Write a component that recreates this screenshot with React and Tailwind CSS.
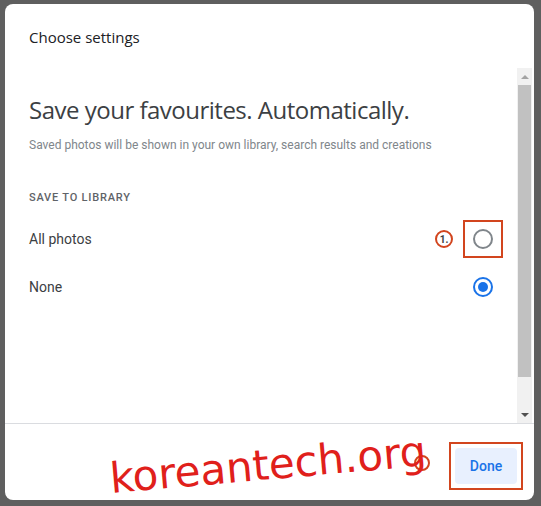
import { useState } from 'react'

function Radio({ checked }) {
  return checked ? (
    <span className="flex h-[20px] w-[20px] items-center justify-center rounded-full border-2 border-[#1a73e8]">
      <span className="h-[10px] w-[10px] rounded-full bg-[#1a73e8]" />
    </span>
  ) : (
    <span className="block h-[20px] w-[20px] rounded-full border-2 border-[#80868b]" />
  )
}

export default function App() {
  const [choice, setChoice] = useState("none")

  return (
    <div className="relative w-[541px] h-[506px] overflow-hidden bg-[#5f5f5f] pt-[4px] pl-[5px] pr-[7px] pb-[6px] font-['Roboto','Liberation_Sans',sans-serif]">
      <div className="flex h-full flex-col overflow-hidden rounded-lg bg-white">
        <div className="h-[64px] shrink-0 pl-[24px] pt-[23px]">
          <h2 className="font-['Open_Sans','Roboto',sans-serif] text-[15px] leading-[20px] font-medium text-[#202124]">Choose settings</h2>
        </div>

        <div className="flex h-[355px] shrink-0">
          <div className="flex-1 pl-[24px] pr-[24px] pt-[26px]">
            <h1 className="text-[24px] leading-[32px] text-[#3c4043] font-['Open_Sans','Roboto',sans-serif] tracking-[-0.5px]">
              Save your favourites. Automatically.
            </h1>
            <p className="mt-[11px] text-[12px] leading-[16px] text-[#80868b]">
              Saved photos will be shown in your own library, search results and creations
            </p>
            <div className="mt-[37px] text-[11px] leading-[16px] font-medium tracking-[0.8px] text-[#5f6368]">
              SAVE TO LIBRARY
            </div>
            <div className="mt-[9px]">
              <div
                className="flex h-[48px] items-center justify-between cursor-pointer"
                onClick={() => setChoice("all")}
              >
                <span className="text-[14px] text-[#3c4043]">All photos</span>
                <div className="flex items-center">
                  <span className="mr-[10px] flex h-[18px] w-[18px] items-center justify-center rounded-full border-2 border-[#d2451e] text-[10px] font-bold text-[#3c4043]">
                    1.
                  </span>
                  <span className="flex h-[38px] w-[40px] items-center justify-center border-2 border-[#d2451e] -mr-[10px]">
                    <Radio checked={choice === "all"} />
                  </span>
                </div>
              </div>
              <div
                className="flex h-[48px] items-center justify-between cursor-pointer"
                onClick={() => setChoice("none")}
              >
                <span className="text-[14px] text-[#3c4043]">None</span>
                <Radio checked={choice === "none"} />
              </div>
            </div>
          </div>

          <div className="mr-[2px] flex w-[15px] flex-col bg-[#f1f1f1]">
            <div className="flex h-[17px] items-center justify-center">
              <span className="h-0 w-0 border-x-[4px] border-b-[4px] border-x-transparent border-b-[#a3a3a3]" />
            </div>
            <div className="mx-[1px] h-[292px] bg-[#c1c1c1]" />
            <div className="flex-1" />
            <div className="flex h-[17px] items-center justify-center">
              <span className="h-0 w-0 border-x-[4px] border-t-[4px] border-x-transparent border-t-[#505050]" />
            </div>
          </div>
        </div>

        <div className="flex flex-1 items-start justify-end border-t border-[#dadce0] pr-[11px] pt-[18px]">
          <div className="border-2 border-[#d2451e] p-[4px]">
            <button className="h-[36px] w-[62px] rounded-[4px] bg-[#e8f0fe] text-[14px] font-medium text-[#1a73e8]">
              Done
            </button>
          </div>
        </div>
      </div>

      <span className="absolute left-[414px] top-[455px] h-[16px] w-[16px] rounded-full border-2 border-[#d2451e]" />
      <div className="absolute left-[112px] top-[455px] origin-bottom-left -rotate-[5deg] font-['DejaVu_Sans',sans-serif] text-[42px] leading-[48px] text-[#e0201b]">
        koreantech.org
      </div>
    </div>
  )
}
